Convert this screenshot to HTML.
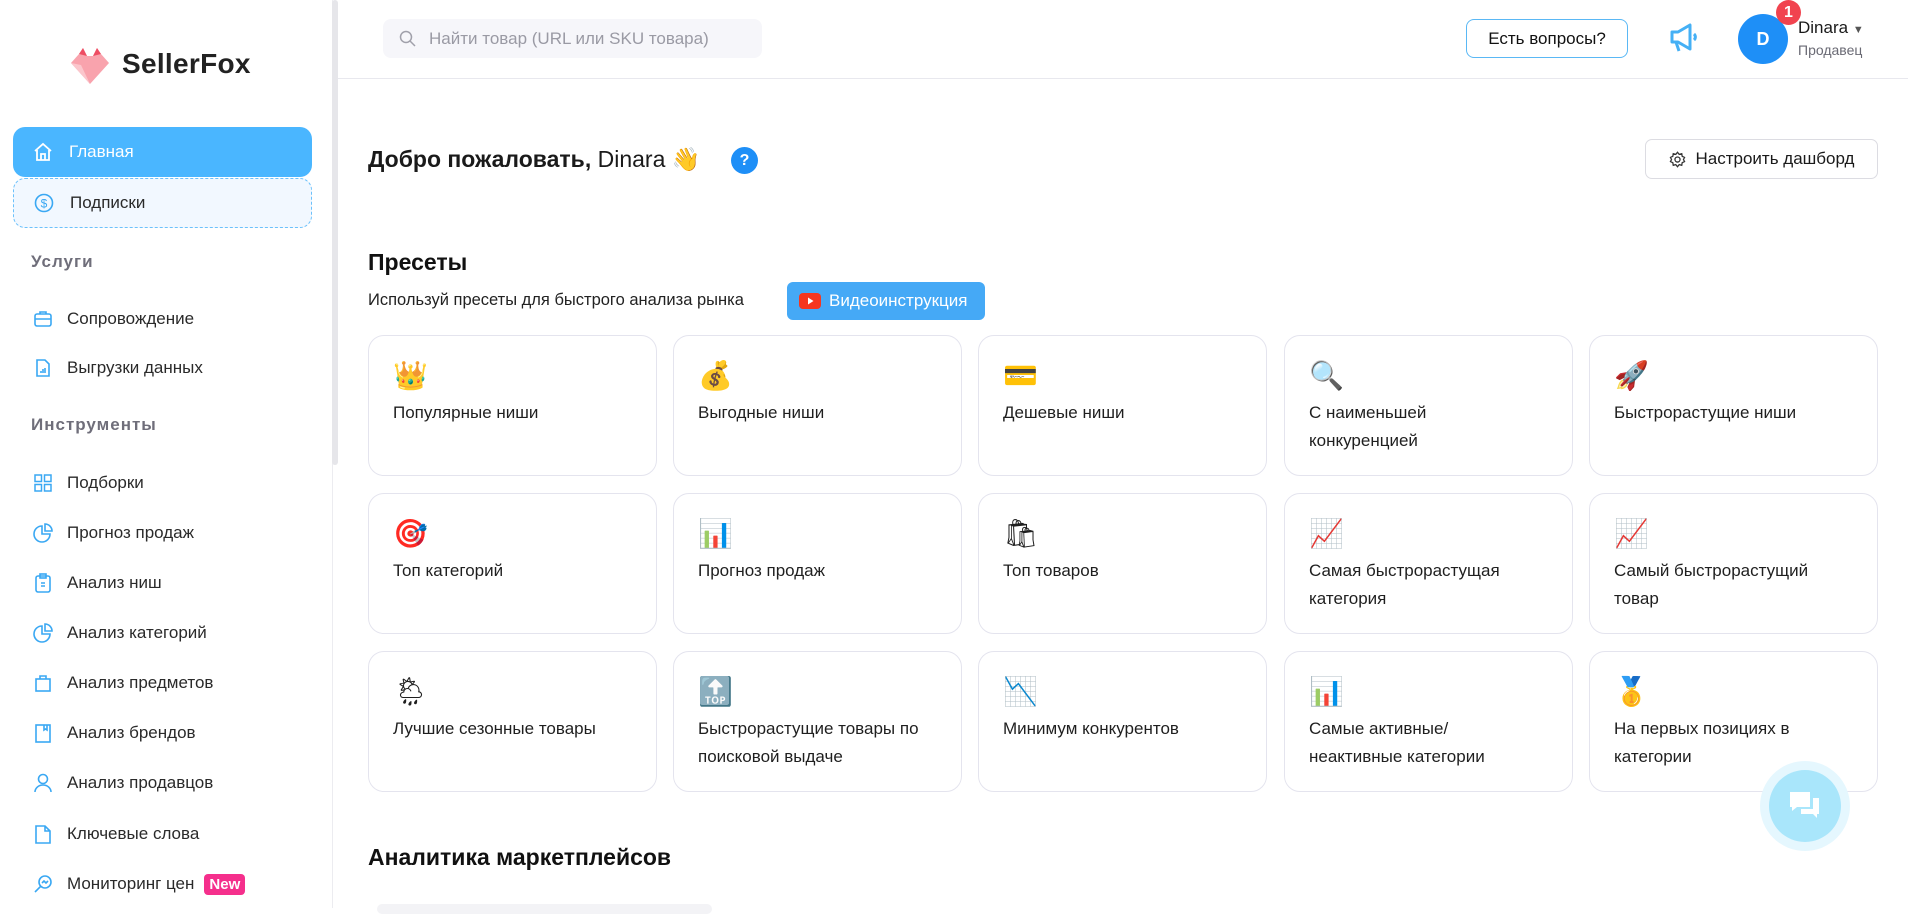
<!DOCTYPE html>
<html><head><meta charset="utf-8">
<style>
*{box-sizing:border-box;margin:0;padding:0}
body{width:1908px;height:908px;overflow:hidden;background:#fff;font-family:"Liberation Sans",sans-serif;color:#1f1f1f;position:relative}
.side{position:absolute;left:0;top:0;width:333px;height:908px;background:#fff;border-right:1px solid #ececf0}
.thumb{position:absolute;left:332px;top:0;width:6px;height:465px;background:#e6e6ea;border-radius:3px}
.logo{position:absolute;left:71px;top:48px}
.logotext{position:absolute;left:122px;top:48px;font-size:28px;font-weight:bold;color:#222;letter-spacing:.3px}
.item{position:absolute;left:13px;width:299px;height:50px;border-radius:12px;display:flex;align-items:center;padding-left:20px;font-size:17px;color:#2a2a2a}
.item svg{margin-right:16px;flex:none}
.active{background:#4ab6ff;color:#fff}
.sub{background:#f2f8ff;border:1px dashed #6cc1fb}
.lab{position:absolute;left:31px;font-size:17px;font-weight:bold;color:#6f6e7a;letter-spacing:1px}
.nav{position:absolute;left:33px;height:22px;font-size:17px;color:#2a2a2a;display:flex;align-items:center}
.nav svg{margin-right:14px}
.hdr{position:absolute;left:338px;top:0;right:0;height:79px;border-bottom:1px solid #e8e8ee}
.search{position:absolute;left:383px;top:19px;width:379px;height:39px;background:#f6f6fa;border-radius:8px;font-size:17px;color:#9a9aa4;display:flex;align-items:center;padding-left:46px}
.q{position:absolute;left:1466px;top:19px;width:162px;height:39px;border:1px solid #5ab8f5;border-radius:8px;font-size:17px;display:flex;align-items:center;justify-content:center;color:#111}
.av{position:absolute;left:1738px;top:14px;width:50px;height:50px;border-radius:50%;background:#1e8ff7;color:#fff;font-size:18px;font-weight:bold;display:flex;align-items:center;justify-content:center}
.badge{position:absolute;left:1776px;top:0;width:25px;height:25px;border-radius:50%;background:#f1434f;color:#fff;font-size:16px;font-weight:bold;display:flex;align-items:center;justify-content:center}
h1{position:absolute;left:368px;top:146px;font-size:23px;font-weight:bold;color:#1a1a1a}
h1 span{font-weight:normal}
.help{position:absolute;left:731px;top:147px;width:27px;height:27px;border-radius:50%;background:#1e8ff7;color:#fff;font-size:16px;font-weight:bold;display:flex;align-items:center;justify-content:center}
.cfg{position:absolute;left:1645px;top:139px;width:233px;height:40px;border:1px solid #dcdce2;border-radius:7px;display:flex;align-items:center;justify-content:center;font-size:17px;color:#1a1a1a}
h2{position:absolute;left:368px;font-size:23px;font-weight:bold;color:#111}
.subt{position:absolute;left:368px;top:291px;font-size:16.5px;color:#222}
.vid{position:absolute;left:787px;top:282px;width:198px;height:38px;background:#45a9f6;border-radius:6px;color:#fff;font-size:17px;display:flex;align-items:center;padding-left:12px}
.card{position:absolute;width:289px;height:141px;border:1px solid #e4e4ee;border-radius:16px;padding:23px 0 0 24px}
.card .t{font-size:17px;line-height:28px;color:#1f1f1f;margin-top:6px;width:226px}
.em{height:34px;font-size:28px;line-height:34px}
.chat{position:absolute;left:1760px;top:761px;width:90px;height:90px;border-radius:50%;background:#e5f7fe;display:flex;align-items:center;justify-content:center}
.chat div{width:72px;height:72px;border-radius:50%;background:#a9e6fb;display:flex;align-items:center;justify-content:center}
</style></head><body>
<div class="side"></div><div class="thumb"></div>
<svg class="logo" width="38" height="36" viewBox="0 0 38 36"><path d="M0 15 L8 6 L12 0 L16 8 L22 8 L26 0 L30 6 L38 15 L19 36Z" fill="#f9a3ad"/><path d="M8 6 L12 0 L16 8Z M22 8 L26 0 L30 6Z" fill="#ee4d63"/><path d="M0 15 L19 36 L10 17Z" fill="#fbc6cc"/></svg>
<div class="logotext">SellerFox</div>
<div class="item active" style="top:127px"><svg width="20" height="20" viewBox="0 0 20 20" fill="none" stroke="#fff" stroke-width="1.8"><path d="M2 9 L10 2 L18 9 M4 8 V18 H16 V8 M8 18 V12 H12 V18"/></svg>Главная</div>
<div class="item sub" style="top:178px"><svg width="20" height="20" viewBox="0 0 20 20" fill="none" stroke="#3aa8f3" stroke-width="1.6"><circle cx="10" cy="10" r="8.5"/><text x="10" y="14.5" font-size="12" text-anchor="middle" fill="#3aa8f3" stroke="none" font-family="Liberation Sans">$</text></svg>Подписки</div>
<div class="lab" style="top:252px">Услуги</div>
<div class="nav" style="top:308px"><svg width="20" height="20" viewBox="0 0 20 20" fill="none" stroke="#3aa8f3" stroke-width="1.6"><rect x="2" y="5" width="16" height="12" rx="2"/><path d="M7 5V3h6v2M2 10h16"/></svg>Сопровождение</div>
<div class="nav" style="top:357px"><svg width="20" height="20" viewBox="0 0 20 20" fill="none" stroke="#3aa8f3" stroke-width="1.6"><path d="M4 2h8l4 4v12H4z"/><path d="M8 15v-2M10 15v-4M12 15v-5"/></svg>Выгрузки данных</div>
<div class="lab" style="top:415px">Инструменты</div>
<div class="nav" style="top:472px"><svg width="20" height="20" viewBox="0 0 20 20" fill="none" stroke="#3aa8f3" stroke-width="1.5"><rect x="2" y="2" width="6.5" height="6.5"/><rect x="11.5" y="2" width="6.5" height="6.5"/><rect x="2" y="11.5" width="6.5" height="6.5"/><rect x="11.5" y="11.5" width="6.5" height="6.5"/></svg>Подборки</div>
<div class="nav" style="top:522px"><svg width="20" height="20" viewBox="0 0 20 20" fill="none" stroke="#3aa8f3" stroke-width="1.6"><path d="M9 3a8 8 0 1 0 8 8H9z"/><path d="M12 1v7h7a7 7 0 0 0-7-7z"/></svg>Прогноз продаж</div>
<div class="nav" style="top:572px"><svg width="20" height="20" viewBox="0 0 20 20" fill="none" stroke="#3aa8f3" stroke-width="1.6"><rect x="3" y="3" width="14" height="16" rx="2"/><rect x="7" y="1" width="6" height="4"/><path d="M8 10h4M8 13h4"/></svg>Анализ ниш</div>
<div class="nav" style="top:622px"><svg width="20" height="20" viewBox="0 0 20 20" fill="none" stroke="#3aa8f3" stroke-width="1.6"><path d="M9 3a8 8 0 1 0 8 8H9z"/><path d="M12 1v7h7a7 7 0 0 0-7-7z"/></svg>Анализ категорий</div>
<div class="nav" style="top:672px"><svg width="20" height="20" viewBox="0 0 20 20" fill="none" stroke="#3aa8f3" stroke-width="1.6"><rect x="3" y="6" width="14" height="12"/><path d="M7 6V3h6v3"/></svg>Анализ предметов</div>
<div class="nav" style="top:722px"><svg width="20" height="20" viewBox="0 0 20 20" fill="none" stroke="#3aa8f3" stroke-width="1.6"><rect x="3" y="2" width="14" height="17"/><path d="M11 2v5l1.5-1 1.5 1V2"/></svg>Анализ брендов</div>
<div class="nav" style="top:772px"><svg width="20" height="20" viewBox="0 0 20 20" fill="none" stroke="#3aa8f3" stroke-width="1.6"><circle cx="10" cy="6" r="4.5"/><path d="M2 19a8 7 0 0 1 16 0"/></svg>Анализ продавцов</div>
<div class="nav" style="top:823px"><svg width="20" height="20" viewBox="0 0 20 20" fill="none" stroke="#3aa8f3" stroke-width="1.6"><path d="M3 2h9l5 5v12H3z M12 2v5h5"/></svg>Ключевые слова</div>
<div class="nav" style="top:873px"><svg width="20" height="20" viewBox="0 0 20 20" fill="none" stroke="#3aa8f3" stroke-width="1.6"><circle cx="12" cy="8" r="6"/><path d="M8 12l-6 6M9 9l2-2 2 2 2-2"/></svg>Мониторинг цен <span style="margin-left:10px;background:#f52f8c;color:#fff;font-weight:bold;font-size:15px;padding:2px 5px;border-radius:4px">New</span></div>

<div class="hdr"></div>
<div class="search">Найти товар (URL или SKU товара)</div>
<svg style="position:absolute;left:399px;top:30px" width="17" height="17" viewBox="0 0 17 17" fill="none" stroke="#a0a0aa" stroke-width="1.5"><circle cx="7" cy="7" r="5.5"/><path d="M11 11l5 5"/></svg>
<div class="q">Есть вопросы?</div>
<svg style="position:absolute;left:1668px;top:22px" width="32" height="32" viewBox="0 0 32 32" fill="none" stroke="#45b0f5" stroke-width="3" stroke-linejoin="round"><path d="M4 10h6l12-7v24l-12-7H4z"/><path d="M8 20l3 9"/><path d="M26 12a4 4 0 0 1 0 6"/></svg>
<div class="av">D</div><div class="badge">1</div>
<div style="position:absolute;left:1798px;top:18px;font-size:17px;color:#1a1a1a">Dinara <span style="font-size:11px;color:#555">▼</span></div>
<div style="position:absolute;left:1798px;top:42px;font-size:14px;color:#6a6a74">Продавец</div>

<h1>Добро пожаловать, <span>Dinara 👋</span></h1>
<div class="help">?</div>
<div class="cfg"><svg width="17" height="17" viewBox="0 0 20 20" fill="none" stroke="#333" stroke-width="1.5" style="margin-right:10px"><circle cx="10" cy="10" r="3"/><path d="M10 1.5l2 2.5 3-.8.5 3 2.8 1.3-1.3 2.5 1.3 2.5-2.8 1.3-.5 3-3-.8-2 2.5-2-2.5-3 .8-.5-3L1.7 12.5 3 10 1.7 7.5l2.8-1.3.5-3 3 .8z"/></svg>Настроить дашборд</div>

<h2 style="top:249px">Пресеты</h2>
<div class="subt">Используй пресеты для быстрого анализа рынка</div>
<div class="vid"><svg width="22" height="16" viewBox="0 0 22 16" style="margin-right:8px"><rect width="22" height="16" rx="4" fill="#f5361f"/><path d="M9 4.5v7l5.5-3.5z" fill="#fff"/></svg>Видеоинструкция</div>

<div class="card" style="left:368px;top:335px"><div class="em">👑</div><div class="t">Популярные ниши</div></div>
<div class="card" style="left:673px;top:335px"><div class="em">💰</div><div class="t">Выгодные ниши</div></div>
<div class="card" style="left:978px;top:335px"><div class="em">💳</div><div class="t">Дешевые ниши</div></div>
<div class="card" style="left:1284px;top:335px"><div class="em">🔍</div><div class="t">С наименьшей конкуренцией</div></div>
<div class="card" style="left:1589px;top:335px"><div class="em">🚀</div><div class="t">Быстрорастущие ниши</div></div>
<div class="card" style="left:368px;top:493px"><div class="em">🎯</div><div class="t">Топ категорий</div></div>
<div class="card" style="left:673px;top:493px"><div class="em">📊</div><div class="t">Прогноз продаж</div></div>
<div class="card" style="left:978px;top:493px"><div class="em">🛍</div><div class="t">Топ товаров</div></div>
<div class="card" style="left:1284px;top:493px"><div class="em">📈</div><div class="t">Самая быстрорастущая категория</div></div>
<div class="card" style="left:1589px;top:493px"><div class="em">📈</div><div class="t">Самый быстрорастущий товар</div></div>
<div class="card" style="left:368px;top:651px"><div class="em">🌦</div><div class="t">Лучшие сезонные товары</div></div>
<div class="card" style="left:673px;top:651px"><div class="em">🔝</div><div class="t">Быстрорастущие товары по поисковой выдаче</div></div>
<div class="card" style="left:978px;top:651px"><div class="em">📉</div><div class="t">Минимум конкурентов</div></div>
<div class="card" style="left:1284px;top:651px"><div class="em">📊</div><div class="t">Самые активные/<br>неактивные категории</div></div>
<div class="card" style="left:1589px;top:651px"><div class="em">🥇</div><div class="t">На первых позициях в категории</div></div>

<h2 style="top:844px">Аналитика маркетплейсов</h2>
<div style="position:absolute;left:377px;top:904px;width:335px;height:10px;background:#f3f3f6;border-radius:6px"></div>
<div class="chat"><div><svg width="34" height="32" viewBox="0 0 34 32" fill="#fff"><path d="M2 2h20v15H9l-5 4v-4H2z"/><path d="M25 8h6v16h-2v4l-4-4H13v-5h12z"/></svg></div></div>
</body></html>
